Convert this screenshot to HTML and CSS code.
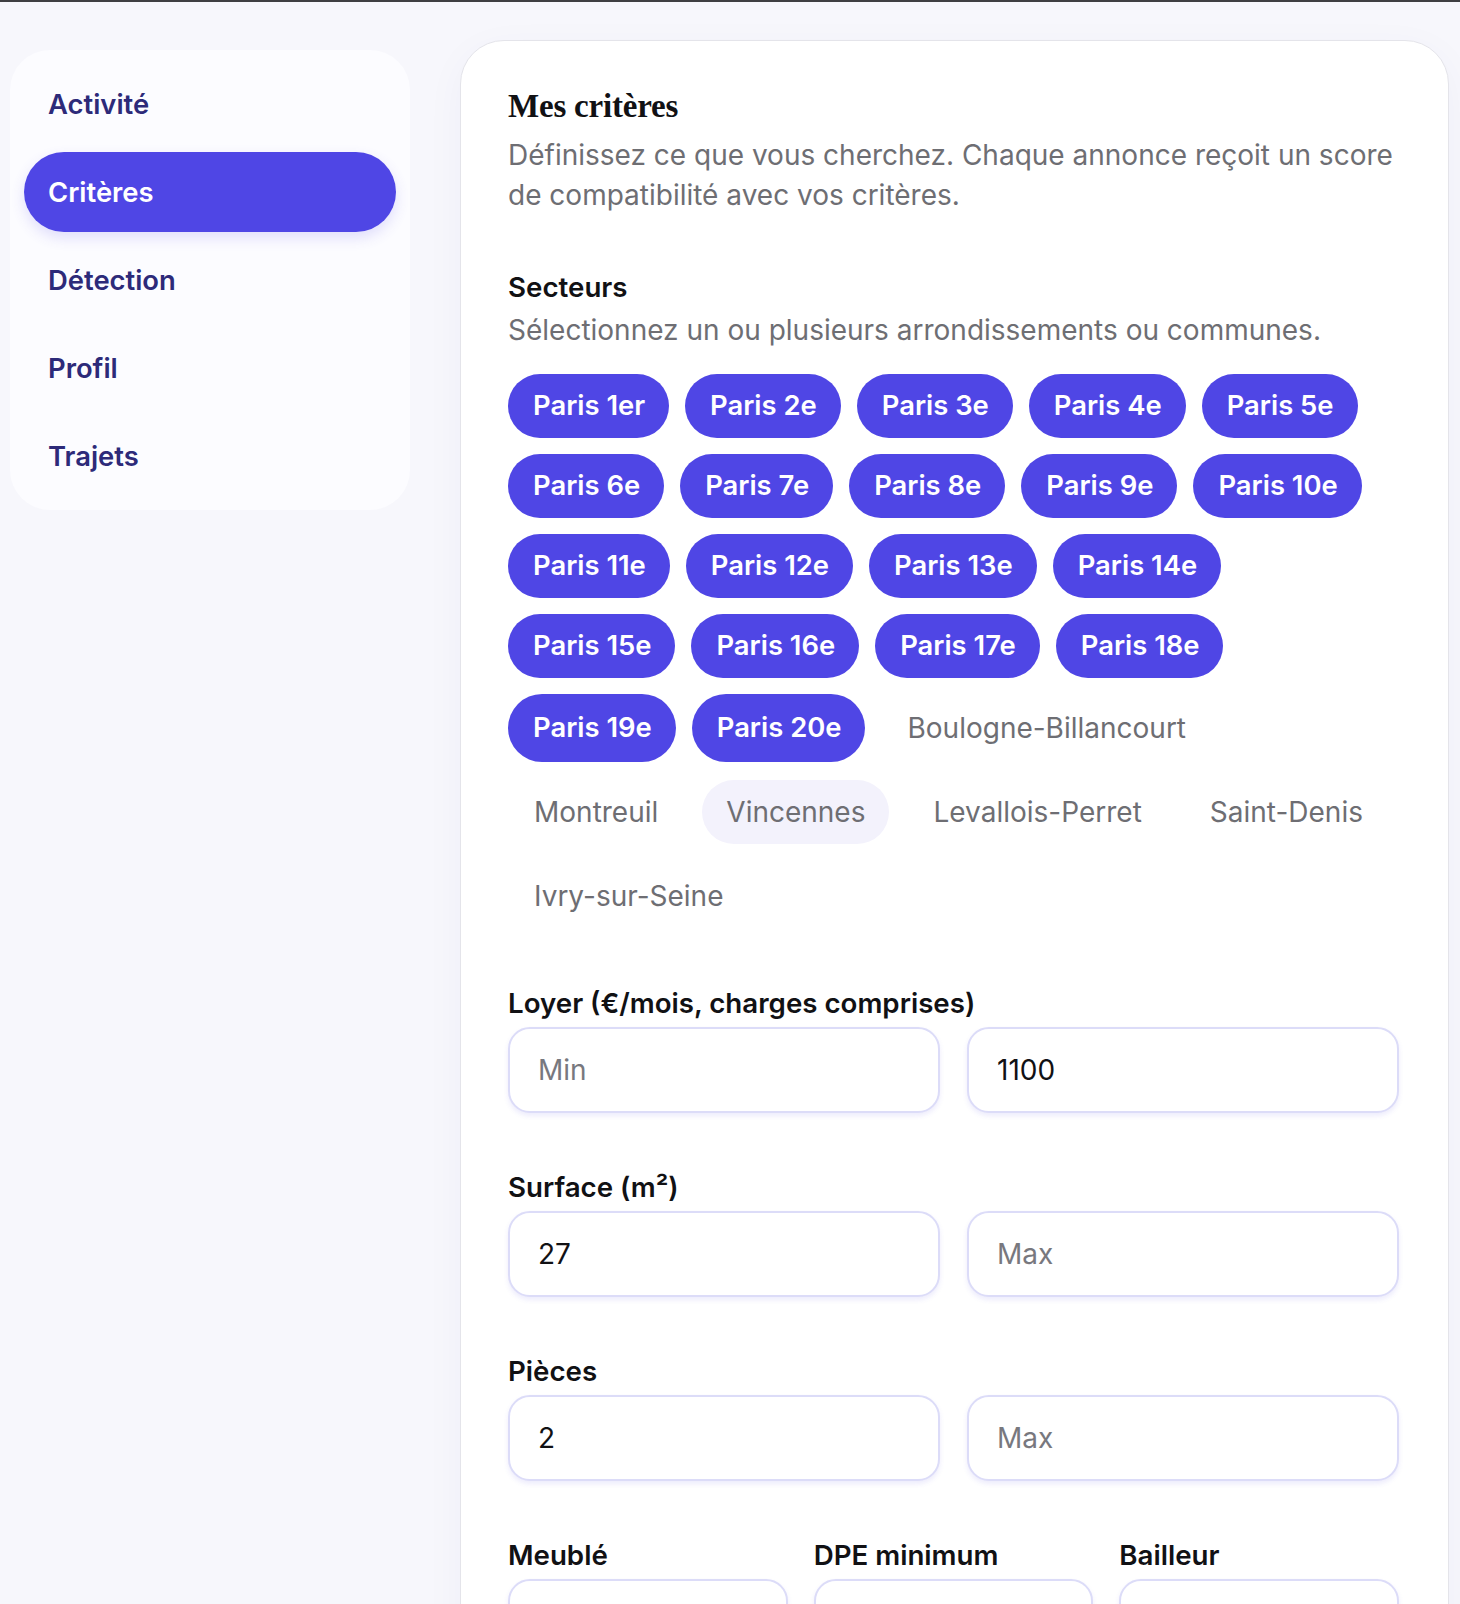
FILE: index.html
```html
<!DOCTYPE html>
<html lang="fr">
<head>
<meta charset="utf-8">
<title>Mes critères</title>
<link rel="stylesheet" href="styles.css">
</head>
<body>
<div class="topbar"></div>
<div class="layout">
  <nav class="side">
    <a class="nav-item">Activité</a>
    <a class="nav-item active">Critères</a>
    <a class="nav-item">Détection</a>
    <a class="nav-item">Profil</a>
    <a class="nav-item">Trajets</a>
  </nav>
  <main class="card">
    <h1 class="title">Mes critères</h1>
    <p class="lead">Définissez ce que vous cherchez. Chaque annonce reçoit un score de compatibilité avec vos critères.</p>

    <section class="field first">
      <div class="label">Secteurs</div>
      <div class="hint">Sélectionnez un ou plusieurs arrondissements ou communes.</div>
      <div class="chips">
        <span class="chip on">Paris 1er</span>
        <span class="chip on">Paris 2e</span>
        <span class="chip on">Paris 3e</span>
        <span class="chip on">Paris 4e</span>
        <span class="chip on">Paris 5e</span>
        <span class="chip on">Paris 6e</span>
        <span class="chip on">Paris 7e</span>
        <span class="chip on">Paris 8e</span>
        <span class="chip on">Paris 9e</span>
        <span class="chip on">Paris 10e</span>
        <span class="chip on">Paris 11e</span>
        <span class="chip on">Paris 12e</span>
        <span class="chip on">Paris 13e</span>
        <span class="chip on">Paris 14e</span>
        <span class="chip on">Paris 15e</span>
        <span class="chip on">Paris 16e</span>
        <span class="chip on">Paris 17e</span>
        <span class="chip on">Paris 18e</span>
        <span class="chip on">Paris 19e</span>
        <span class="chip on">Paris 20e</span>
        <span class="chip off">Boulogne-Billancourt</span>
        <span class="chip off">Montreuil</span>
        <span class="chip off hover">Vincennes</span>
        <span class="chip off">Levallois-Perret</span>
        <span class="chip off">Saint-Denis</span>
        <span class="chip off">Ivry-sur-Seine</span>
      </div>
    </section>

    <section class="field">
      <label class="label">Loyer (€/mois, charges comprises)</label>
      <div class="row2">
        <input class="input" type="text" placeholder="Min">
        <input class="input" type="text" value="1100">
      </div>
    </section>

    <section class="field">
      <label class="label">Surface (m²)</label>
      <div class="row2">
        <input class="input" type="text" value="27">
        <input class="input" type="text" placeholder="Max">
      </div>
    </section>

    <section class="field">
      <label class="label">Pièces</label>
      <div class="row2">
        <input class="input" type="text" value="2">
        <input class="input" type="text" placeholder="Max">
      </div>
    </section>

    <section class="field">
      <div class="row3">
        <div class="col">
          <label class="label">Meublé</label>
          <div class="input select"></div>
        </div>
        <div class="col">
          <label class="label">DPE minimum</label>
          <div class="input select"></div>
        </div>
        <div class="col">
          <label class="label">Bailleur</label>
          <div class="input select"></div>
        </div>
      </div>
    </section>
  </main>
</div>
</body>
</html>
```

FILE: styles.css
```css
* {
  box-sizing: border-box;
}

html, body {
  margin: 0;
  padding: 0;
}

body {
  background: #f7f7fc;
  font-family: Inter, "Noto Sans", sans-serif;
  color: #111114;
  overflow: hidden;
}

.topbar {
  height: 2px;
  background: #3f3f42;
}

.layout {
  display: flex;
  align-items: flex-start;
  padding: 38px 11px 0 10px;
  gap: 50px;
}

.side {
  flex: 0 0 400px;
  margin-top: 10px;
  background: #fcfcff;
  border-radius: 40px;
  padding: 14px;
  display: flex;
  flex-direction: column;
  gap: 8px;
}

.nav-item {
  display: flex;
  align-items: center;
  height: 80px;
  padding: 0 25px 0 24px;
  border-radius: 40px;
  font-size: 27.4px;
  font-weight: 600;
  color: #2d2a79;
  text-decoration: none;
}

.nav-item.active {
  background: #4f46e5;
  color: #ffffff;
  box-shadow: 0 6px 14px rgba(79, 70, 229, 0.16);
}

.card {
  flex: 1 1 auto;
  min-height: 1700px;
  background: #ffffff;
  border: 1.5px solid #e4e4ea;
  border-radius: 44px;
  padding: 45px 49px 40px 47px;
  box-shadow: 0 10px 40px rgba(60, 60, 120, 0.04);
}

.title {
  margin: 0 0 9px;
  font-family: "Liberation Serif", "Times New Roman", serif;
  font-weight: 700;
  font-size: 33px;
  line-height: 40px;
  letter-spacing: -0.2px;
  color: #111114;
}

.lead {
  margin: 0;
  font-size: 28px;
  line-height: 40px;
  color: #6e6e73;
}

.field {
  margin-top: 54px;
}

.field.first {
  margin-top: 52px;
}

.label {
  display: block;
  font-size: 27.7px;
  line-height: 40px;
  font-weight: 600;
  color: #111114;
}

.hint {
  margin-top: 3px;
  font-size: 28px;
  line-height: 40px;
  color: #6e6e73;
}

.chips {
  margin-top: 24px;
  display: flex;
  flex-wrap: wrap;
  gap: 16px;
  margin-bottom: -1px;
}

.chip {
  display: inline-flex;
  align-items: center;
  min-height: 64px;
  border-radius: 36px;
  font-size: 28px;
  line-height: 1;
  white-space: nowrap;
}

.chip.on {
  background: #4f46e5;
  color: #ffffff;
  font-size: 27.4px;
  font-weight: 600;
  padding: 0 24px 0 25px;
}

.chip.off {
  min-height: 68px;
  border: 2px solid transparent;
  background-clip: padding-box;
  color: #6e6e73;
  font-weight: 400;
  padding: 0 24px;
}

.chip.off.hover {
  background-color: #f3f2fc;
}

.row2 {
  margin-top: 4px;
  display: grid;
  grid-template-columns: 1fr 1fr;
  gap: 27px;
}

.row3 {
  display: grid;
  grid-template-columns: 1fr 1fr 1fr;
  gap: 26px;
}

.row3 .input {
  margin-top: 4px;
}

.input {
  display: block;
  width: 100%;
  height: 86px;
  border: 2px solid #dcdcf8;
  border-radius: 22px;
  background: #ffffff;
  padding: 0 28px;
  font-family: Inter, "Noto Sans", sans-serif;
  font-size: 28px;
  color: #111114;
  box-shadow: 0 3px 5px rgba(79, 70, 229, 0.10);
  outline: none;
}

.input::placeholder {
  color: #78787e;
}
```
